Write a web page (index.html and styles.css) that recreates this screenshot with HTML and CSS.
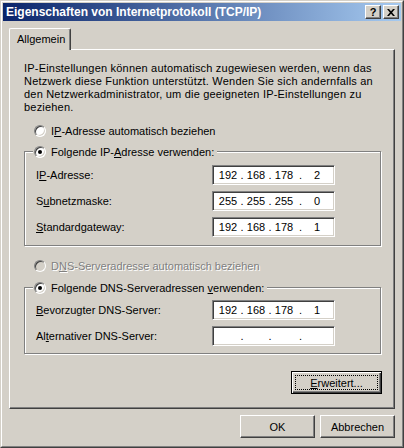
FILE: index.html
```html
<!DOCTYPE html>
<html lang="de">
<head>
    <meta charset="UTF-8">
    <meta name="viewport" content="width=device-width, initial-scale=1.0">
    <title>Eigenschaften von Internetprotokoll (TCP/IP)</title>
    <link rel="stylesheet" href="styles.css">
</head>
<body>
    <div class="window">
        <div class="frame">
            <div class="titlebar">
                <span class="title">Eigenschaften von Internetprotokoll (TCP/IP)</span>
                <div class="caption-buttons">
                    <span class="cap-btn help">?</span>
                    <span class="cap-btn close">
                        <svg width="8" height="7" viewBox="0 0 8 7"><path d="M0 0h2l2 2.2L6 0h2L5.1 3.5 8 7H6L4 4.8 2 7H0l2.9-3.5z" fill="#000"/></svg>
                    </span>
                </div>
            </div>

            <div class="content">
                <div class="tabs">
                    <div class="tab">Allgemein</div>
                </div>

                <div class="panel">
                    <p class="intro">IP-Einstellungen können automatisch zugewiesen werden, wenn das<br>Netzwerk diese Funktion unterstützt. Wenden Sie sich andernfalls an<br>den Netzwerkadministrator, um die geeigneten IP-Einstellungen zu<br>beziehen.</p>

                    <div class="option">
                        <span class="radio"></span>
                        <span>I<u>P</u>-Adresse automatisch beziehen</span>
                    </div>

                    <div class="group group-ip">
                        <div class="legend">
                            <span class="radio checked"></span>
                            <span>Folgende IP-<u>A</u>dresse verwenden:</span>
                        </div>
                        <div class="fields">
                            <span class="label">I<u>P</u>-Adresse:</span>
                            <div class="ipbox"><span>192</span><span class="dot">.</span><span>168</span><span class="dot">.</span><span>178</span><span class="dot">.</span><span>2</span></div>

                            <span class="label">S<u>u</u>bnetzmaske:</span>
                            <div class="ipbox"><span>255</span><span class="dot">.</span><span>255</span><span class="dot">.</span><span>255</span><span class="dot">.</span><span>0</span></div>

                            <span class="label"><u>S</u>tandardgateway:</span>
                            <div class="ipbox"><span>192</span><span class="dot">.</span><span>168</span><span class="dot">.</span><span>178</span><span class="dot">.</span><span>1</span></div>
                        </div>
                    </div>

                    <div class="option disabled">
                        <span class="radio"></span>
                        <span>D<u>N</u>S-Serveradresse automatisch beziehen</span>
                    </div>

                    <div class="group group-dns">
                        <div class="legend">
                            <span class="radio checked"></span>
                            <span>Folgende DNS-Serveradressen <u>v</u>erwenden:</span>
                        </div>
                        <div class="fields">
                            <span class="label"><u>B</u>evorzugter DNS-Server:</span>
                            <div class="ipbox"><span>192</span><span class="dot">.</span><span>168</span><span class="dot">.</span><span>178</span><span class="dot">.</span><span>1</span></div>

                            <span class="label">Al<u>t</u>ernativer DNS-Server:</span>
                            <div class="ipbox"><span></span><span class="dot">.</span><span></span><span class="dot">.</span><span></span><span class="dot">.</span><span></span></div>
                        </div>
                    </div>

                    <div class="panel-actions">
                        <div class="btn btn-default"><span class="focus"><u>E</u>rweitert...</span></div>
                    </div>
                </div>

                <div class="actions">
                    <div class="btn">OK</div>
                    <div class="btn">Abbrechen</div>
                </div>
            </div>
        </div>
    </div>
</body>
</html>
```

FILE: styles.css
```css
body {
    margin: 0;
    background-color: #d4d0c8;
    font-family: "Liberation Sans", Arial, sans-serif;
    font-size: 11px;
    color: #000;
}
.window {
    width: 404px;
    height: 448px;
    box-sizing: border-box;
    border: 1px solid;
    border-color: #d4d0c8 #404040 #404040 #d4d0c8;
    background-color: #d4d0c8;
}
.frame {
    height: 100%;
    box-sizing: border-box;
    border: 1px solid;
    border-color: #fff #808080 #808080 #fff;
    padding: 1px;
}

/* title bar */
.titlebar {
    height: 18px;
    display: flex;
    align-items: center;
    justify-content: space-between;
    padding: 0 2px 0 3px;
    background: linear-gradient(to right, #0a246a, #a6caf0);
}
.title {
    color: #fff;
    font-weight: bold;
    font-size: 12px;
    white-space: nowrap;
}
.caption-buttons {
    display: flex;
    gap: 2px;
}
.cap-btn {
    width: 16px;
    height: 14px;
    box-sizing: border-box;
    display: flex;
    align-items: center;
    justify-content: center;
    background-color: #d4d0c8;
    border: 1px solid;
    border-color: #fff #404040 #404040 #fff;
    box-shadow: inset -1px -1px 0 #808080;
}
.help {
    font-weight: bold;
    font-size: 11px;
    line-height: 12px;
}

/* dialog content */
.content {
    padding: 7px 6px 7px 6px;
}
.tabs {
    display: flex;
}
.tab {
    position: relative;
    z-index: 1;
    width: 62px;
    height: 22px;
    box-sizing: border-box;
    margin-bottom: -1px;
    padding-left: 7px;
    line-height: 20px;
    background-color: #d4d0c8;
    border-top: 1px solid #fff;
    border-left: 1px solid #fff;
    border-right: 1px solid #404040;
    border-radius: 2px 2px 0 0;
    box-shadow: inset -1px 0 0 #808080;
}
.panel {
    border: 1px solid;
    border-color: #fff #404040 #404040 #fff;
    box-shadow: inset -1px -1px 0 #808080;
    padding: 12px 13px 14px 14px;
}
.intro {
    margin: 0;
    line-height: 13px;
    letter-spacing: 0.2px;
    white-space: nowrap;
}
.option {
    display: flex;
    align-items: center;
    gap: 5px;
    height: 13px;
    margin: 10px 0 0 10px;
}
.option.disabled {
    margin-top: 13px;
    color: #808080;
    text-shadow: 1px 1px 0 #fff;
}
.option.disabled .radio {
    background-color: #d4d0c8;
}
.radio {
    width: 12px;
    height: 12px;
    box-sizing: border-box;
    flex: none;
    display: flex;
    align-items: center;
    justify-content: center;
    border-radius: 50%;
    background-color: #fff;
    border: 1px solid;
    border-color: #808080 #fff #fff #808080;
    box-shadow: inset 1px 1px 0 #404040, inset -1px -1px 0 #d4d0c8;
}
.radio.checked::after {
    content: "";
    width: 4px;
    height: 4px;
    border-radius: 50%;
    background-color: #000;
}

/* group boxes */
.group {
    border: 1px solid #808080;
    box-shadow: inset 1px 1px 0 #fff, 1px 1px 0 #fff;
}
.group-ip {
    margin-top: 14px;
    padding-bottom: 8px;
}
.group-dns {
    margin-top: 15px;
    padding-bottom: 7px;
}
.legend {
    display: flex;
    align-items: center;
    gap: 5px;
    width: max-content;
    height: 13px;
    margin: -7px 0 0 8px;
    padding: 0 3px 0 1px;
    background-color: #d4d0c8;
}
.fields {
    display: grid;
    grid-template-columns: 176px 123px;
    row-gap: 6px;
    align-items: center;
    padding-left: 11px;
    margin-top: 7px;
}
.group-dns .fields {
    margin-top: 6px;
}
.ipbox {
    height: 20px;
    box-sizing: border-box;
    display: grid;
    grid-template-columns: 24px 4px 24px 4px 24px 9px 24px;
    align-items: center;
    padding-left: 3px;
    line-height: 18px;
    text-align: center;
    background-color: #fff;
    border: 1px solid;
    border-color: #808080 #fff #fff #808080;
    box-shadow: inset 1px 1px 0 #404040, inset -1px -1px 0 #d4d0c8;
}

/* buttons */
.panel-actions {
    display: flex;
    justify-content: flex-end;
    margin: 17px -1px 0 0;
}
.btn {
    width: 75px;
    height: 23px;
    box-sizing: border-box;
    display: flex;
    align-items: center;
    justify-content: center;
    background-color: #d4d0c8;
    border: 1px solid;
    border-color: #fff #404040 #404040 #fff;
    box-shadow: inset -1px -1px 0 #808080;
}
.btn-default {
    width: 91px;
    padding: 3px;
    border-color: #000;
    box-shadow: inset 1px 1px 0 #fff, inset -1px -1px 0 #404040, inset -2px -2px 0 #808080;
}
.focus {
    flex: 1;
    align-self: stretch;
    display: flex;
    align-items: center;
    justify-content: center;
    border: 1px dotted #000;
}
.actions {
    display: flex;
    justify-content: flex-end;
    gap: 5px;
    margin-top: 6px;
}
```
